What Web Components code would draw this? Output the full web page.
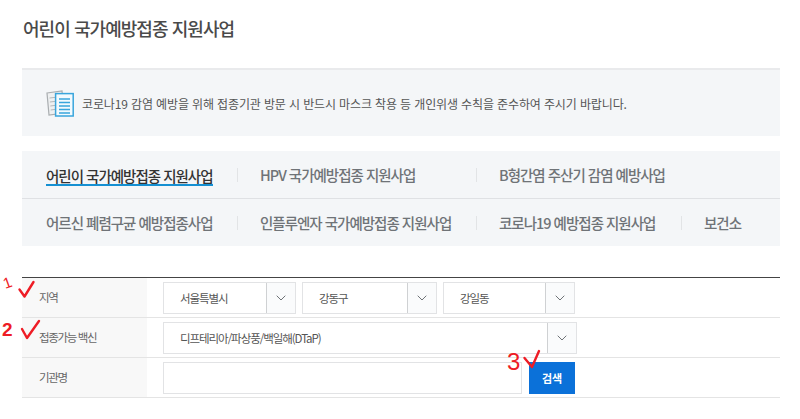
<!DOCTYPE html>
<html lang="ko">
<head>
<meta charset="utf-8">
<title>어린이 국가예방접종 지원사업</title>
<style>
    html, body { margin: 0; background: #fff; }
    body {
        position: relative;
        height: 419px;
        overflow: hidden;
        font-family: "Noto Sans CJK KR", "Noto Sans", sans-serif;
        color: #555;
    }
    #page {
        display: block;
        width: 758px;
        margin-left: 22px;
    }
</style>
</head>
<body>

<template id="x-title">
    <style>
        :host { display: block; height: 68px; }
        h1 {
            margin: 0;
            padding: 16px 0 0 1px;
            font-size: 18px;
            line-height: 25px;
            font-weight: 500;
            letter-spacing: -0.95px;
            color: #4a4a4a;
        }
    </style>
    <h1><slot></slot></h1>
</template>

<template id="x-notice">
    <style>
        :host {
            display: flex;
            align-items: center;
            gap: 8px;
            box-sizing: border-box;
            height: 68px;
            padding-left: 24px;
            background: #f4f6f8;
            border-top: 2px solid #e9eaec;
            font-size: 12px;
            letter-spacing: -0.13px;
            color: #555;
        }
        svg { display: block; flex: none; }
    </style>
    <svg width="28" height="27" viewBox="0 0 28 27">
        <path d="M1 3 L16 1 L18 23 L3 25 Z" fill="#eef0f1" stroke="#a9adb0" stroke-width="1.2"/>
        <path d="M3.5 8 L9 7.4 M3.9 12 L9 11.4 M4.3 16 L9 15.4 M4.7 20 L9 19.4" stroke="#b5b8ba" stroke-width="1"/>
        <rect x="9.6" y="3.6" width="17.6" height="22.4" fill="#f2fafe" stroke="#39a5dc" stroke-width="1.5"/>
        <path d="M13 9 H24 M13 12.5 H24 M13 16 H24 M13 19.5 H24 M13 23 H24" stroke="#39a5dc" stroke-width="1.3"/>
    </svg>
    <span><slot></slot></span>
</template>

<template id="x-tabs">
    <style>
        :host {
            display: grid;
            grid-template-columns: 215px 239px 205px 99px;
            grid-template-rows: 47px 48px;
            margin-top: 15px;
            background: #f4f6f8;
        }
    </style>
    <slot></slot>
</template>

<template id="x-tab">
    <style>
        :host {
            display: flex;
            align-items: center;
            position: relative;
            box-sizing: border-box;
            padding-left: 24px;
            font-size: 14.5px;
            font-weight: 500;
            letter-spacing: -1px;
            color: #6f7377;
            white-space: nowrap;
        }
        :host([row="1"]) { grid-row: 1; }
        :host([row="2"]) { grid-row: 2; border-top: 1px solid #dfe1e4; }
        :host([divider]) { padding-left: 23px; }
        :host([divider])::before {
            content: "";
            position: absolute;
            left: 0;
            top: 17px;
            height: 14px;
            border-left: 1px solid #e2e4e6;
        }
        :host([active]) { color: #333; }
        span { display: block; line-height: 20px; }
        :host([active]) span {
            box-shadow: 0 1px 0 0 #1590d2;
            border-bottom: 1px solid #1590d2;
            line-height: 17px;
            margin-top: 2px;
        }
    </style>
    <span><slot></slot></span>
</template>

<template id="x-search-form">
    <style>
        :host {
            display: block;
            margin-top: 31px;
            border-top: 1px solid #444;
        }
    </style>
    <slot></slot>
</template>

<template id="x-form-row">
    <style>
        :host {
            display: grid;
            grid-template-columns: 125px 1fr;
            box-sizing: border-box;
            height: 40px;
            border-bottom: 1px solid #e4e4e4;
        }
        label {
            display: flex;
            align-items: center;
            padding: 0 0 2px 17px;
            background: #f8f8f8;
            font-size: 11.5px;
            letter-spacing: -1.35px;
            color: #666;
        }
        div {
            display: flex;
            align-items: center;
            gap: 6px;
            padding-left: 16px;
        }
    </style>
    <label></label>
    <div><slot></slot></div>
</template>

<template id="x-select">
    <style>
        :host {
            display: flex;
            box-sizing: border-box;
            height: 32px;
            background: #fff;
            border: 1px solid #e2e3e5;
            font-size: 11.5px;
            letter-spacing: -1.05px;
            color: #555;
        }
        span {
            flex: 1;
            display: flex;
            align-items: center;
            padding-left: 16px;
            white-space: nowrap;
        }
        i {
            flex: none;
            display: flex;
            align-items: center;
            justify-content: center;
            width: 28px;
            background: #fafbfc;
            border-left: 1px solid #cfd1d3;
        }
    </style>
    <span><slot></slot></span>
    <i>
        <svg width="10" height="6" viewBox="0 0 10 6">
            <path d="M.7 .7 L5 5 L9.3 .7" fill="none" stroke="#6f7377" stroke-width="1"/>
        </svg>
    </i>
</template>

<template id="x-input">
    <style>
        :host {
            display: block;
            box-sizing: border-box;
            width: 359px;
            height: 32px;
            background: #fff;
            border: 1px solid #e2e3e5;
        }
    </style>
</template>

<template id="x-button">
    <style>
        :host {
            display: flex;
            align-items: center;
            justify-content: center;
            width: 46px;
            height: 32px;
            margin-left: 1px;
            background: #0b71d9;
            color: #fff;
            font-size: 11px;
            font-weight: 700;
            letter-spacing: -0.2px;
        }
    </style>
    <slot></slot>
</template>

<template id="x-marks">
    <style>
        :host { display: block; position: absolute; inset: 0; pointer-events: none; }
        svg { position: absolute; left: 0; top: 0; }
        span {
            position: absolute;
            color: #ee1c25;
            font-family: "Liberation Sans", sans-serif;
            line-height: 1;
        }
        .one { left: 3px; top: 275px; font-size: 15px; transform: rotate(-20deg); }
        .two { left: 2px; top: 320px; font-size: 19px; font-weight: 700; }
        .three { left: 507px; top: 350px; font-size: 24px; }
    </style>
    <svg width="800" height="419" fill="none" stroke="#ee1c25" stroke-width="2.4" stroke-linecap="round" stroke-linejoin="round">
        <path d="M19.5 289.5 L24.5 296.5 L33.5 282"/>
        <path d="M22 329 L27 338 L39 321"/>
        <path d="M524.5 358 L532 367 L539 351"/>
    </svg>
    <span class="one">1</span>
    <span class="two">2</span>
    <span class="three">3</span>
</template>

<x-page id="page">
    <x-title>어린이 국가예방접종 지원사업</x-title>
    <x-notice>코로나19 감염 예방을 위해 접종기관 방문 시 반드시 마스크 착용 등 개인위생 수칙을 준수하여 주시기 바랍니다.</x-notice>
    <x-tabs>
        <x-tab row="1" active>어린이 국가예방접종 지원사업</x-tab>
        <x-tab row="1" divider>HPV 국가예방접종 지원사업</x-tab>
        <x-tab row="1" divider style="grid-column: 3 / 5">B형간염 주산기 감염 예방사업</x-tab>
        <x-tab row="2">어르신 폐렴구균 예방접종사업</x-tab>
        <x-tab row="2" divider>인플루엔자 국가예방접종 지원사업</x-tab>
        <x-tab row="2" divider>코로나19 예방접종 지원사업</x-tab>
        <x-tab row="2" divider>보건소</x-tab>
    </x-tabs>
    <x-search-form>
        <x-form-row label="지역">
            <x-select style="width:133px">서울특별시</x-select>
            <x-select style="width:135px">강동구</x-select>
            <x-select style="width:132px">강일동</x-select>
        </x-form-row>
        <x-form-row label="접종가능 백신">
            <x-select style="width:414px">디프테리아/파상풍/백일해(DTaP)</x-select>
        </x-form-row>
        <x-form-row label="기관명">
            <x-input></x-input>
            <x-button>검색</x-button>
        </x-form-row>
    </x-search-form>
</x-page>
<x-marks></x-marks>

<script>
    // every element just clones its own template to the shadow dom
    class Base extends HTMLElement {
        constructor () {
            super();
            const shadowRoot = this.attachShadow({mode: 'open'});
            const template = document.querySelector('#' + this.localName);
            if (template) shadowRoot.appendChild(template.content.cloneNode(true));
        }
    }

    ['x-title', 'x-notice', 'x-tabs', 'x-tab', 'x-search-form', 'x-select', 'x-input', 'x-button', 'x-marks']
        .forEach(name => window.customElements.define(name, class extends Base {}));

    window.customElements.define('x-form-row', class extends Base {
        connectedCallback () {
            this.shadowRoot.querySelector('label').textContent = this.getAttribute('label');
        }
    });
    window.customElements.define('x-page', class extends HTMLElement {
        constructor () {
            super();
            this.attachShadow({mode: 'open'}).innerHTML = '<style>:host{display:block}</style><slot></slot>';
        }
    });
</script>
</body>
</html>
